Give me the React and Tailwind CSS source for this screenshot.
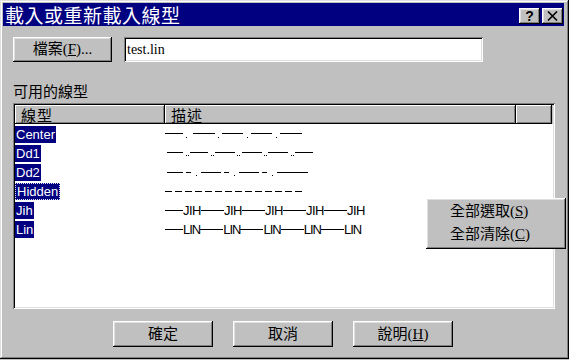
import React from "react";

const RAISED =
  "shadow-[inset_-1px_-1px_0_#000,inset_1px_1px_0_#fff,inset_-2px_-2px_0_#808080,inset_2px_2px_0_#dfdfdf]";
const SUNKEN =
  "shadow-[inset_1px_1px_0_#808080,inset_-1px_-1px_0_#fff,inset_2px_2px_0_#000,inset_-2px_-2px_0_#dfdfdf]";
const CJK = "font-['Noto_Sans_CJK_TC',sans-serif]";
const MIX = "font-['Liberation_Serif','Noto_Sans_CJK_TC',serif]";
const ARIAL = "font-['Liberation_Sans',Arial,sans-serif]";

function Dashes({ segs, dots = [], y = 8, dy = 12 }) {
  return (
    <svg width="150" height="19" shapeRendering="crispEdges">
      {segs.map(([a, b], i) => (
        <rect key={i} x={a} y={y} width={b - a} height="1" fill="#000" />
      ))}
      {dots.map((d, i) => (
        <rect key={"d" + i} x={d} y={dy} width="1" height="1" fill="#000" />
      ))}
    </svg>
  );
}

function TextLine({ word, tight }) {
  const parts = [];
  for (let i = 0; i < 5; i++) {
    parts.push(
      <div key={"l" + i} className={`shrink-0 h-px bg-black ${i === 0 ? "w-[18px]" : "w-[23px]"}`} />
    );
    parts.push(
      <span
        key={"t" + i}
        className={`shrink-0 ${ARIAL} text-[13px] ${tight ? "tracking-[-1px]" : "tracking-[-0.5px]"} leading-none text-black`}
      >
        {word}
      </span>
    );
  }
  return <div className="flex items-center h-[19px]">{parts}</div>;
}

const hidden = Array.from({ length: 14 }, (_, i) => [i * 10, i * 10 + 7]);

const rows = [
  {
    name: "Center",
    desc: (
      <Dashes
        segs={[[0, 18], [28, 50], [57, 78], [86, 107], [115, 137]]}
        dots={[21, 53, 82, 111]}
        y={8}
        dy={12}
      />
    ),
  },
  {
    name: "Dd1",
    desc: (
      <Dashes
        segs={[[2, 18], [25, 43], [50, 70], [77, 97], [103, 123], [130, 148]]}
        dots={[21, 23, 46, 48, 72, 74, 99, 101, 126, 128]}
        y={8}
        dy={11}
      />
    ),
  },
  {
    name: "Dd2",
    desc: (
      <Dashes
        segs={[[2, 18], [21, 26], [36, 56], [59, 64], [74, 94], [97, 102], [112, 143]]}
        dots={[31, 69, 107]}
        y={9}
        dy={12}
      />
    ),
  },
  { name: "Hidden", focus: true, desc: <Dashes segs={hidden} y={9} /> },
  { name: "Jih", desc: <TextLine word="JIH" /> },
  { name: "Lin", desc: <TextLine word="LIN" tight /> },
];

function Btn({ children, className = "" }) {
  return (
    <div
      className={`${RAISED} bg-[#c0c0c0] flex items-center justify-center ${MIX} text-[15px] text-black ${className}`}
    >
      {children}
    </div>
  );
}

export default function App() {
  return (
    <div className="w-[569px] h-[360px] bg-[#c0c0c0]">
      <div
        className={`relative w-[569px] h-[359px] bg-[#c0c0c0] shadow-[inset_-1px_-1px_0_#000,inset_1px_1px_0_#dfdfdf,inset_-2px_-2px_0_#808080,inset_2px_2px_0_#fff] pt-[3px] pl-[3px] pr-[5px] flex flex-col`}
      >
        {/* Title bar */}
        <div className="h-[23px] bg-[#000080] flex items-center justify-between pl-[2px] pr-[1px]">
          <span className={`${CJK} text-[19px] tracking-[0.5px] leading-none text-white`}>
            載入或重新載入線型
          </span>
          <div className="flex gap-[2px] mt-[3px]">
            <div className={`${RAISED} bg-[#c0c0c0] w-[21px] h-[16px] flex items-center justify-center`}>
              <span className={`${ARIAL} font-bold text-[14px] leading-none text-black`}>?</span>
            </div>
            <div className={`${RAISED} bg-[#c0c0c0] w-[21px] h-[16px] flex items-center justify-center`}>
              <svg width="11" height="10" viewBox="0 0 11 10">
                <path d="M1 0.5 L10 9.5 M10 0.5 L1 9.5" stroke="#000" strokeWidth="1.6" />
              </svg>
            </div>
          </div>
        </div>

        {/* Content */}
        <div className="pl-[10px] flex flex-col">
          <div className="mt-[11px] flex gap-[12px]">
            <Btn className="w-[99px] h-[25px]">
              <span>
                檔案(<span className="underline">F</span>)...
              </span>
            </Btn>
            <div className={`${SUNKEN} bg-white w-[359px] h-[25px] flex items-center pl-[3px]`}>
              <span className="font-['Liberation_Serif',serif] text-[14px] text-black">test.lin</span>
            </div>
          </div>

          <div className={`mt-[19px] h-[20px] leading-[20px] ${CJK} text-[15px] text-black`}>
            可用的線型
          </div>

          <div className={`mt-[2px] ${SUNKEN} bg-white w-[542px] h-[206px] p-[2px]`}>
            <div className="flex h-[19px]">
              <div
                className={`w-[150px] h-[19px] bg-[#c0c0c0] shadow-[inset_-1px_-1px_0_#000,inset_1px_1px_0_#fff,inset_-2px_-2px_0_#808080] pl-[6px] ${CJK} text-[15px] leading-[19px] tracking-[1px] text-black`}
              >
                線型
              </div>
              <div
                className={`w-[351px] h-[19px] bg-[#c0c0c0] shadow-[inset_-1px_-1px_0_#000,inset_1px_1px_0_#fff,inset_-2px_-2px_0_#808080] pl-[6px] ${CJK} text-[15px] leading-[19px] tracking-[1px] text-black`}
              >
                描述
              </div>
              <div className="w-[36px] h-[19px] bg-[#c0c0c0] shadow-[inset_-1px_-1px_0_#000,inset_1px_1px_0_#fff,inset_-2px_-2px_0_#808080]" />
              <div className="flex-1 h-[19px] bg-[#c0c0c0]" />
            </div>
            <div className="flex flex-col pt-[1px]">
              {rows.map((r) => (
                <div key={r.name} className="flex items-center h-[19px]">
                  <div className="w-[150px] shrink-0 flex items-center">
                    <span
                      className={`bg-[#000080] text-white ${ARIAL} text-[13px] h-[17px] leading-[17px] px-[1px] ${
                        r.focus ? "outline-1 outline-dotted outline-[#e0e0ff] -outline-offset-1 px-[2px]" : ""
                      }`}
                    >
                      {r.name}
                    </span>
                  </div>
                  <div className="w-[300px] shrink-0">{r.desc}</div>
                </div>
              ))}
            </div>
          </div>

          <div className="mt-[12px] pl-[100px] flex gap-[20px]">
            <Btn className="w-[100px] h-[26px]">確定</Btn>
            <Btn className="w-[100px] h-[26px]">取消</Btn>
            <Btn className="w-[100px] h-[26px]">
              <span>
                說明(<span className="underline">H</span>)
              </span>
            </Btn>
          </div>
        </div>

        {/* Context menu */}
        <div className={`absolute left-[426px] top-[198px] w-[140px] h-[51px] bg-[#c0c0c0] ${RAISED} pt-[2px] flex flex-col`}>
          <div className={`h-[23px] leading-[23px] pl-[24px] ${MIX} text-[15px] text-black`}>
            全部選取(<span className="underline">S</span>)
          </div>
          <div className={`h-[23px] leading-[23px] pl-[24px] ${MIX} text-[15px] text-black`}>
            全部清除(<span className="underline">C</span>)
          </div>
        </div>
      </div>
    </div>
  );
}
